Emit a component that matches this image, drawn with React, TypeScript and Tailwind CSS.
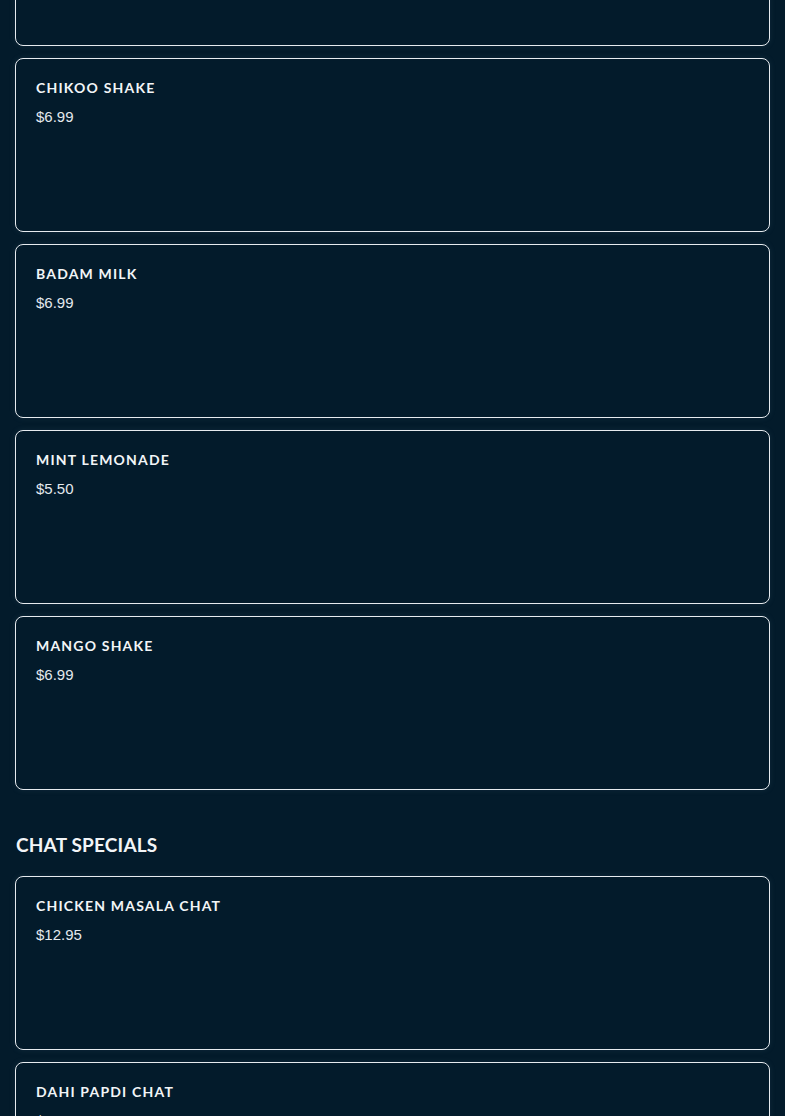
import React from "react";

type Item = { name: string; price: string };

const drinks: Item[] = [
  { name: "Mango Lassi", price: "$5.99" },
  { name: "Chikoo Shake", price: "$6.99" },
  { name: "Badam Milk", price: "$6.99" },
  { name: "Mint Lemonade", price: "$5.50" },
  { name: "Mango Shake", price: "$6.99" },
];

const chat: Item[] = [
  { name: "Chicken Masala Chat", price: "$12.95" },
  { name: "Dahi Papdi Chat", price: "$12.95" },
];

function Card({ item }: { item: Item }) {
  return (
    <div className="h-[174px] rounded-lg border border-[#e6ebef] bg-[#031b2b] px-5 pt-[19px] shadow-[0_0_6px_rgba(120,150,170,0.12)]">
      <div
        className="text-[14px] font-bold uppercase leading-5 tracking-[0.085em] text-[#f2f5f7]"
        style={{ fontFamily: "Lato, 'Open Sans', sans-serif" }}
      >
        {item.name}
      </div>
      <div
        className="mt-[9px] text-[15px] leading-5 text-[#e3e9ee]"
        style={{ fontFamily: "'Liberation Sans', Arial, sans-serif" }}
      >
        {item.price}
      </div>
    </div>
  );
}

export default function App() {
  return (
    <div className="h-[1116px] overflow-hidden bg-[#031b2b] px-[15px]">
      <div className="-mt-[128px] flex flex-col gap-[12px]">
        {drinks.map((d) => (
          <Card key={d.name} item={d} />
        ))}
      </div>
      <h2
        className="mb-[17px] mt-[41px] pl-px text-[19px] font-bold uppercase leading-7 tracking-[0.01em] text-[#f2f5f7]"
        style={{ fontFamily: "Lato, 'Open Sans', sans-serif" }}
      >
        Chat Specials
      </h2>
      <div className="flex flex-col gap-[12px]">
        {chat.map((d) => (
          <Card key={d.name} item={d} />
        ))}
      </div>
    </div>
  );
}
